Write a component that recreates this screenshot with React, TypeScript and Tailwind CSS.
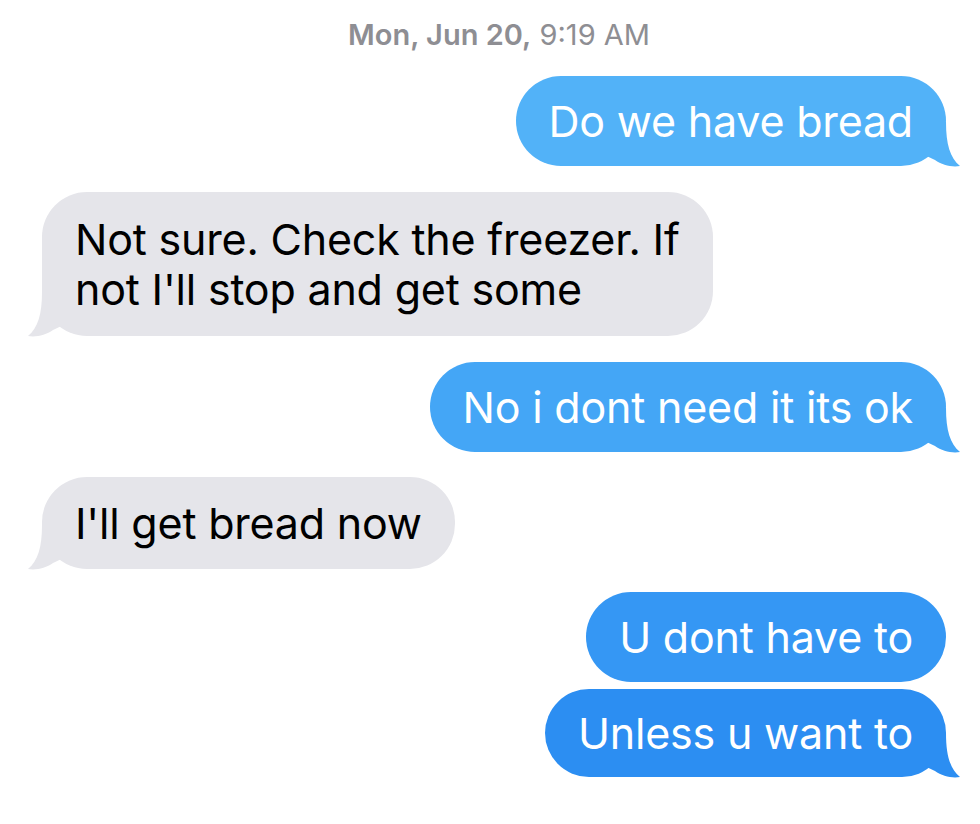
import React from "react";

const Tail = ({ color, side }: { color: string; side: "left" | "right" }) => (
  <svg
    width="40"
    height="45"
    viewBox="0 0 40 45"
    className={
      side === "right"
        ? "absolute right-[-15px] bottom-[-1px]"
        : "absolute left-[-15px] bottom-[-1px] -scale-x-100"
    }
  >
    <path
      d="M0 0 L25 0 C25 22 29 36 39 44 C31 45.5 21 43 14 38 C9 36 4 33 0 30 Z"
      fill={color}
    />
  </svg>
);

const Bubble = ({
  children,
  color,
  side,
  tail,
  className,
}: {
  children: React.ReactNode;
  color: string;
  side: "left" | "right";
  tail: boolean;
  className?: string;
}) => (
  <div
    className={`relative rounded-[45px] px-[33px] whitespace-nowrap text-[43px] leading-[50px] tracking-[-0.2px] ${
      side === "right" ? "self-end text-white" : "self-start text-black"
    } ${className ?? ""}`}
    style={{ backgroundColor: color }}
  >
    {tail && <Tail color={color} side={side} />}
    <span className="relative">{children}</span>
  </div>
);

export default function App() {
  return (
    <div
      className="w-[980px] h-[824px] bg-white flex flex-col pl-[42px] pr-[34px] pt-[17px]"
      style={{ fontFamily: "Inter, 'Liberation Sans', sans-serif" }}
    >
      <div className="text-center text-[29px] leading-[36px] text-[#8e8e93] pl-[10px]">
        <span className="font-semibold">Mon, Jun 20,</span> 9:19 AM
      </div>
      <Bubble color="#52b2f8" side="right" tail className="mt-[23px] py-[20px]">
        Do we have bread
      </Bubble>
      <Bubble color="#e5e5ea" side="left" tail className="mt-[26px] py-[22px]">
        Not sure. Check the freezer. If
        <br />
        not I'll stop and get some
      </Bubble>
      <Bubble color="#44a6f6" side="right" tail className="mt-[26px] py-[20px]">
        No i dont need it its ok
      </Bubble>
      <Bubble color="#e5e5ea" side="left" tail className="mt-[25px] py-[21px]">
        I'll get bread now
      </Bubble>
      <Bubble color="#3597f4" side="right" tail={false} className="mt-[23px] py-[20px]">
        U dont have to
      </Bubble>
      <Bubble color="#2c8ef2" side="right" tail className="mt-[7px] py-[19px]">
        Unless u want to
      </Bubble>
    </div>
  );
}
